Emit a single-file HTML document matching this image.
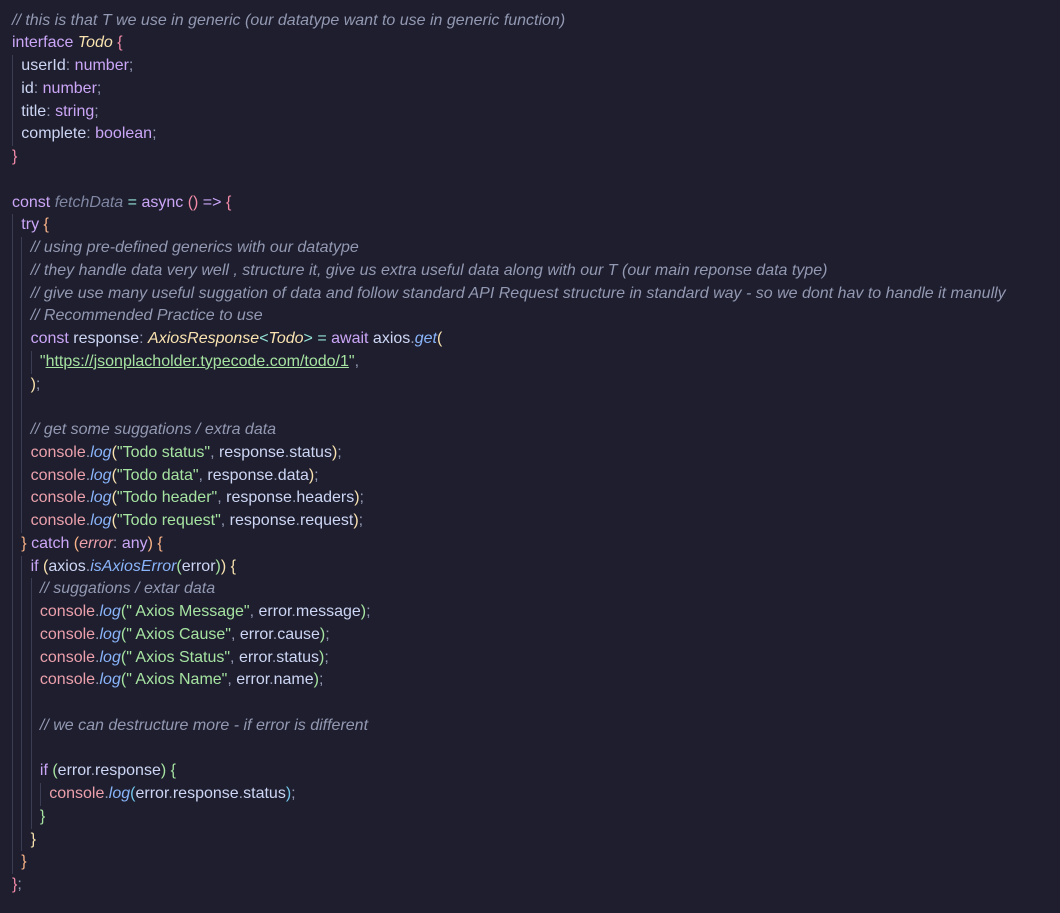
<!DOCTYPE html>
<html><head><meta charset="utf-8"><style>
html,body{margin:0;padding:0;background:#1e1e2e;width:1060px;height:913px;overflow:hidden}
#c{position:absolute;left:12px;top:9.6px;font-family:"Liberation Sans",sans-serif;font-size:16px;color:#cdd6f4}
.l{height:22.76px;line-height:22.76px;white-space:pre}
.g{display:inline-block;width:9.3px;height:22.76px;vertical-align:top;box-shadow:inset 1px 0 0 #3b3d52}
.c{color:#9399b2;font-style:italic}
.k{color:#cba6f7}
.t{color:#f9e2af;font-style:italic}
.s{color:#a6e3a1}
.u{color:#a6e3a1;text-decoration:underline}
.f{color:#89b4fa;font-style:italic}
.v{color:#8087a2;font-style:italic}
.o{color:#94e2d5}
.p{color:#9399b2}
.cn{color:#eba0ac}
.b1{color:#f38ba8}.b2{color:#fab387}.b3{color:#f9e2af}.b4{color:#a6e3a1}.b5{color:#74c7ec}
.e{color:#eba0ac;font-style:italic}
</style></head><body><div id="c"><div class="l"><span class="c">// this is that T we use in generic (our datatype want to use in generic function)</span></div><div class="l"><span class="k">interface</span> <span class="t">Todo</span> <span class="b1">{</span></div><div class="l"><span class="g"></span>userId<span class="p">:</span> <span class="k">number</span><span class="p">;</span></div><div class="l"><span class="g"></span>id<span class="p">:</span> <span class="k">number</span><span class="p">;</span></div><div class="l"><span class="g"></span>title<span class="p">:</span> <span class="k">string</span><span class="p">;</span></div><div class="l"><span class="g"></span>complete<span class="p">:</span> <span class="k">boolean</span><span class="p">;</span></div><div class="l"><span class="b1">}</span></div><div class="l"> </div><div class="l"><span class="k">const</span> <span class="v">fetchData</span> <span class="o">=</span> <span class="k">async</span> <span class="b1">()</span> <span class="k">=&gt;</span> <span class="b1">{</span></div><div class="l"><span class="g"></span><span class="k">try</span> <span class="b2">{</span></div><div class="l"><span class="g"></span><span class="g"></span><span class="c">// using pre-defined generics with our datatype</span></div><div class="l"><span class="g"></span><span class="g"></span><span class="c">// they handle data very well , structure it, give us extra useful data along with our T (our main reponse data type)</span></div><div class="l"><span class="g"></span><span class="g"></span><span class="c">// give use many useful suggation of data and follow standard API Request structure in standard way - so we dont hav to handle it manully</span></div><div class="l"><span class="g"></span><span class="g"></span><span class="c">// Recommended Practice to use</span></div><div class="l"><span class="g"></span><span class="g"></span><span class="k">const</span> response<span class="p">:</span> <span class="t">AxiosResponse</span><span class="o">&lt;</span><span class="t">Todo</span><span class="o">&gt;</span> <span class="o">=</span> <span class="k">await</span> axios<span class="p">.</span><span class="f">get</span><span class="b3">(</span></div><div class="l"><span class="g"></span><span class="g"></span><span class="g"></span><span class="s">"</span><span class="u">https://jsonplacholder.typecode.com/todo/1</span><span class="s">"</span><span class="p">,</span></div><div class="l"><span class="g"></span><span class="g"></span><span class="b3">)</span><span class="p">;</span></div><div class="l"><span class="g"></span><span class="g"></span></div><div class="l"><span class="g"></span><span class="g"></span><span class="c">// get some suggations / extra data</span></div><div class="l"><span class="g"></span><span class="g"></span><span class="cn">console</span><span class="p">.</span><span class="f">log</span><span class="b3">(</span><span class="s">"Todo status"</span><span class="p">,</span> response<span class="p">.</span>status<span class="b3">)</span><span class="p">;</span></div><div class="l"><span class="g"></span><span class="g"></span><span class="cn">console</span><span class="p">.</span><span class="f">log</span><span class="b3">(</span><span class="s">"Todo data"</span><span class="p">,</span> response<span class="p">.</span>data<span class="b3">)</span><span class="p">;</span></div><div class="l"><span class="g"></span><span class="g"></span><span class="cn">console</span><span class="p">.</span><span class="f">log</span><span class="b3">(</span><span class="s">"Todo header"</span><span class="p">,</span> response<span class="p">.</span>headers<span class="b3">)</span><span class="p">;</span></div><div class="l"><span class="g"></span><span class="g"></span><span class="cn">console</span><span class="p">.</span><span class="f">log</span><span class="b3">(</span><span class="s">"Todo request"</span><span class="p">,</span> response<span class="p">.</span>request<span class="b3">)</span><span class="p">;</span></div><div class="l"><span class="g"></span><span class="b2">}</span> <span class="k">catch</span> <span class="b2">(</span><span class="e">error</span><span class="p">:</span> <span class="k">any</span><span class="b2">)</span> <span class="b2">{</span></div><div class="l"><span class="g"></span><span class="g"></span><span class="k">if</span> <span class="b3">(</span>axios<span class="p">.</span><span class="f">isAxiosError</span><span class="b4">(</span>error<span class="b4">)</span><span class="b3">)</span> <span class="b3">{</span></div><div class="l"><span class="g"></span><span class="g"></span><span class="g"></span><span class="c">// suggations / extar data</span></div><div class="l"><span class="g"></span><span class="g"></span><span class="g"></span><span class="cn">console</span><span class="p">.</span><span class="f">log</span><span class="b4">(</span><span class="s">" Axios Message"</span><span class="p">,</span> error<span class="p">.</span>message<span class="b4">)</span><span class="p">;</span></div><div class="l"><span class="g"></span><span class="g"></span><span class="g"></span><span class="cn">console</span><span class="p">.</span><span class="f">log</span><span class="b4">(</span><span class="s">" Axios Cause"</span><span class="p">,</span> error<span class="p">.</span>cause<span class="b4">)</span><span class="p">;</span></div><div class="l"><span class="g"></span><span class="g"></span><span class="g"></span><span class="cn">console</span><span class="p">.</span><span class="f">log</span><span class="b4">(</span><span class="s">" Axios Status"</span><span class="p">,</span> error<span class="p">.</span>status<span class="b4">)</span><span class="p">;</span></div><div class="l"><span class="g"></span><span class="g"></span><span class="g"></span><span class="cn">console</span><span class="p">.</span><span class="f">log</span><span class="b4">(</span><span class="s">" Axios Name"</span><span class="p">,</span> error<span class="p">.</span>name<span class="b4">)</span><span class="p">;</span></div><div class="l"><span class="g"></span><span class="g"></span><span class="g"></span></div><div class="l"><span class="g"></span><span class="g"></span><span class="g"></span><span class="c">// we can destructure more - if error is different</span></div><div class="l"><span class="g"></span><span class="g"></span><span class="g"></span></div><div class="l"><span class="g"></span><span class="g"></span><span class="g"></span><span class="k">if</span> <span class="b4">(</span>error<span class="p">.</span>response<span class="b4">)</span> <span class="b4">{</span></div><div class="l"><span class="g"></span><span class="g"></span><span class="g"></span><span class="g"></span><span class="cn">console</span><span class="p">.</span><span class="f">log</span><span class="b5">(</span>error<span class="p">.</span>response<span class="p">.</span>status<span class="b5">)</span><span class="p">;</span></div><div class="l"><span class="g"></span><span class="g"></span><span class="g"></span><span class="b4">}</span></div><div class="l"><span class="g"></span><span class="g"></span><span class="b3">}</span></div><div class="l"><span class="g"></span><span class="b2">}</span></div><div class="l"><span class="b1">}</span><span class="p">;</span></div></div></body></html>
